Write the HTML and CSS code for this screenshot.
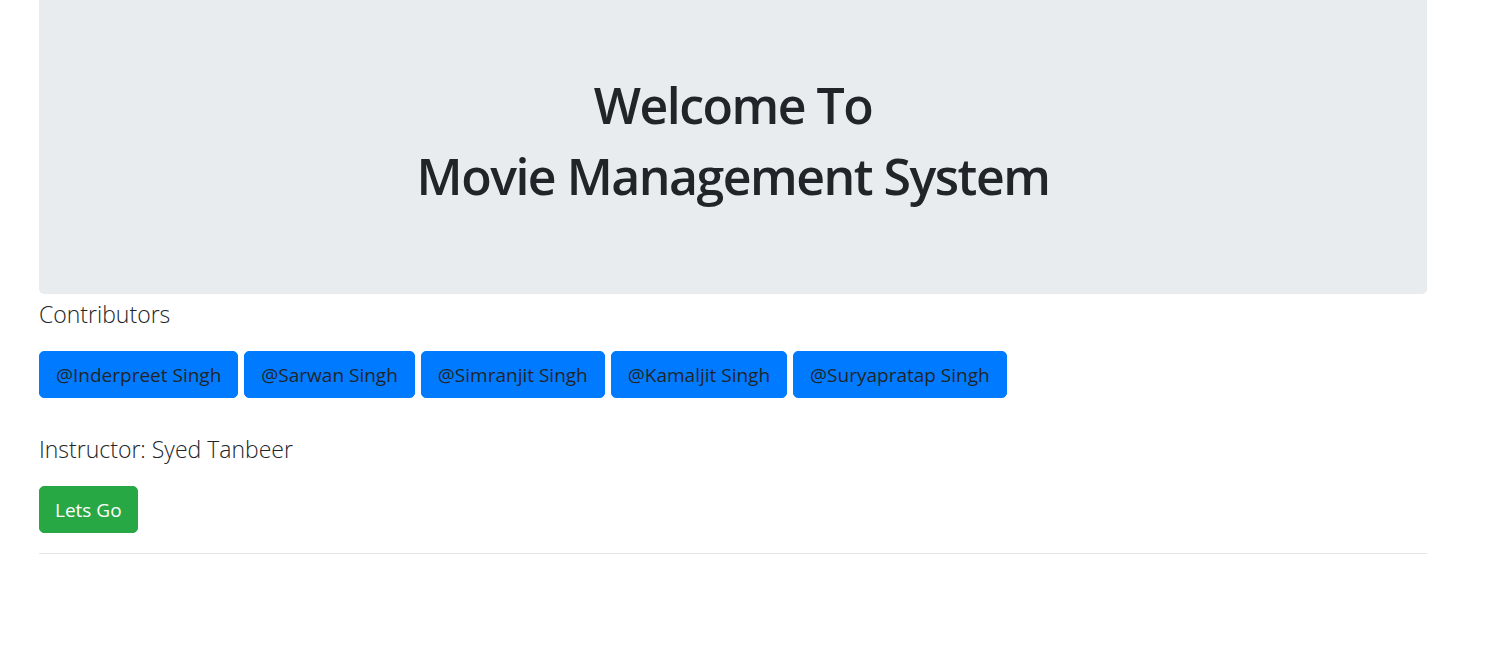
FILE: index.html
```html
<!DOCTYPE html>
<html>
<head>
<meta charset="utf-8">
<link rel="stylesheet" href="styles.css">
</head>
<body>
<div class="page">
  <div class="jumbotron">
    <h1 class="title">Welcome To<br>Movie Management System</h1>
  </div>
  <p class="lead contributors">Contributors</p>
  <div class="btn-row">
    <button class="btn btn-blue">@Inderpreet Singh</button>
    <button class="btn btn-blue">@Sarwan Singh</button>
    <button class="btn btn-blue">@Simranjit Singh</button>
    <button class="btn btn-blue">@Kamaljit Singh</button>
    <button class="btn btn-blue">@Suryapratap Singh</button>
  </div>
  <p class="lead instructor">Instructor: Syed Tanbeer</p>
  <button class="btn btn-green">Lets Go</button>
  <hr class="rule">
</div>
</body>
</html>
```

FILE: styles.css
```css
* { box-sizing: border-box; }
html, body { margin: 0; padding: 0; background: #fff; }
body {
  font-family: "Open Sans", "Noto Sans", sans-serif;
  color: #212529;
}
.page {
  width: 1388px;
  margin-left: 39px;
  display: flex;
  flex-direction: column;
  align-items: flex-start;
}
.jumbotron {
  width: 100%;
  height: 294px;
  background: #e9ecef;
  border-radius: 0 0 5px 5px;
  display: flex;
  align-items: flex-start;
  justify-content: center;
  padding-top: 70px;
}
.title {
  margin: 0;
  text-align: center;
  font-size: 50px;
  font-weight: 600;
  line-height: 71px;
  letter-spacing: -1.5px;
}
.lead {
  margin: 0;
  font-size: 23px;
  font-weight: 300;
  line-height: 30px;
}
.contributors { margin-top: 5px; }
.btn-row {
  display: flex;
  gap: 6px;
  margin-top: 22px;
}
.btn {
  font-family: inherit;
  font-size: 19px;
  line-height: 29px;
  padding: 9px 16px 7px;
  border: 1px solid transparent;
  border-radius: 5px;
  height: 47px;
}
.btn-blue {
  background: #007bff;
  border-color: #007bff;
  color: #212529;
}
.btn-green {
  background: #28a745;
  border-color: #28a745;
  color: #fff;
  padding-left: 15px;
  padding-right: 15px;
}
.instructor { margin-top: 36px; }
.btn-green { margin-top: 22px; }
.rule {
  width: 100%;
  margin: 20px 0 0 0;
  border: 0;
  border-top: 1px solid rgba(0,0,0,0.1);
}
```
